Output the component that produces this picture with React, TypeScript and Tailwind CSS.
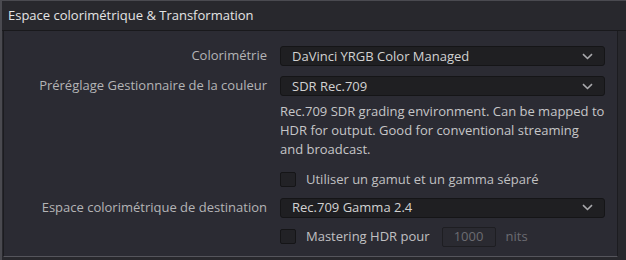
const font = { fontFamily: '"Open Sans", "Noto Sans", sans-serif' };

function Chevron() {
    return (
        <svg width="11" height="7" viewBox="0 0 11 7" className="text-[#a8a8ac]">
            <path d="M1 1.2 L5.5 5.5 L10 1.2" fill="none" stroke="currentColor" strokeWidth="1.6" />
        </svg>
    );
}

function Select({ value }: { value: string }) {
    return (
        <div className="flex items-center justify-between h-[20px] w-[325px] rounded-[3px] border border-[#151517] bg-[#1f1f22] pl-[11px] pr-[11px] text-[13px] text-[#d2d2d2]">
            <span className="leading-none">{value}</span>
            <Chevron />
        </div>
    );
}

function Check() {
    return <div className="w-[16px] h-[15px] rounded-[2px] border border-[#151517] bg-[#222226]" />;
}

export default function App() {
    return (
        <div style={font} className="w-[626px] h-[260px] bg-[#28282d] border-l-2 border-t border-[#4a4a50] flex flex-col">
            {/* header */}
            <div className="h-[30px] flex items-center pl-[6px] text-[13px] text-[#e4e4e4] border-b border-[#19191c]">
                Espace colorimétrique &amp; Transformation
            </div>

            {/* body */}
            <div className="ml-[1px] mr-[8px] h-[226px] bg-[#2b2b33] border-l border-r border-b border-[#1c1c20] border-b-[#55555c] pt-[15px] text-[13px] text-[#b4b4b6]">
                <div className="grid grid-cols-[263px_325px] gap-x-[13px] items-center">
                    <div className="text-right">Colorimétrie</div>
                    <Select value="DaVinci YRGB Color Managed" />

                    <div className="text-right mt-[10px]">Préréglage Gestionnaire de la couleur</div>
                    <div className="mt-[10px]"><Select value="SDR Rec.709" /></div>

                    <div />
                    <div className="mt-[6px] whitespace-nowrap leading-[19px] text-[#c6c6c8]">
                        Rec.709 SDR grading environment. Can be mapped to
                        <br />
                        HDR for output. Good for conventional streaming
                        <br />
                        and broadcast.
                    </div>

                    <div />
                    <div className="mt-[11px] flex items-center gap-[10px] text-[#c0c0c2]">
                        <Check />
                        <span>Utiliser un gamut et un gamma séparé</span>
                    </div>

                    <div className="text-right mt-[8px]">Espace colorimétrique de destination</div>
                    <div className="mt-[8px]"><Select value="Rec.709 Gamma 2.4" /></div>

                    <div />
                    <div className="mt-[9px] flex items-center gap-[10px] text-[#c0c0c2]">
                        <Check />
                        <span>Mastering HDR pour</span>
                        <div className="ml-[2px] w-[54px] h-[20px] flex items-center justify-center rounded-[2px] border border-[#1e1e22] bg-[#2a2a31] text-[#6c6c72]">
                            1000
                        </div>
                        <span className="text-[#6c6c72]">nits</span>
                    </div>
                </div>
            </div>
        </div>
    );
}
